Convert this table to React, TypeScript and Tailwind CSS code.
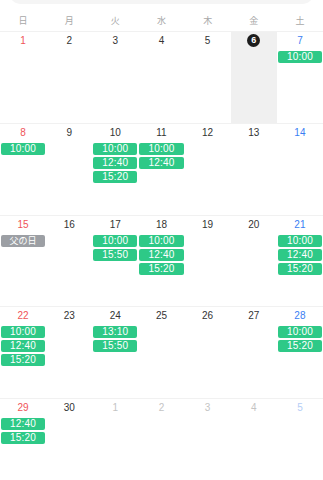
import React from 'react';

type Day = {
  date: number;
  dow: number;
  faded?: boolean;
  today?: boolean;
  holiday?: string;
  slots?: string[];
};

const WEEKDAYS = ['日', '月', '火', '水', '木', '金', '土'];

const slotsByDate: Record<number, string[]> = {
  7: ['10:00'],
  8: ['10:00'],
  10: ['10:00', '12:40', '15:20'],
  11: ['10:00', '12:40'],
  17: ['10:00', '15:50'],
  18: ['10:00', '12:40', '15:20'],
  21: ['10:00', '12:40', '15:20'],
  22: ['10:00', '12:40', '15:20'],
  24: ['13:10', '15:50'],
  28: ['10:00', '15:20'],
  29: ['12:40', '15:20'],
};

function buildWeeks(): Day[][] {
  const weeks: Day[][] = [];
  let d = 1;
  for (let w = 0; w < 5; w++) {
    const week: Day[] = [];
    for (let i = 0; i < 7; i++) {
      const faded = d > 30;
      const date = faded ? d - 30 : d;
      week.push({
        date,
        dow: i,
        faded,
        today: !faded && date === 6,
        holiday: !faded && date === 15 ? '父の日' : undefined,
        slots: faded ? [] : slotsByDate[date] ?? [],
      });
      d++;
    }
    weeks.push(week);
  }
  return weeks;
}

function numberColor(day: Day) {
  if (day.faded) {
    return day.dow === 6 ? 'text-[#b5cdf6]' : 'text-[#c4c4c4]';
  }
  if (day.dow === 0) return 'text-[#ef5458]';
  if (day.dow === 6) return 'text-[#3a7ef3]';
  return 'text-[#333333]';
}

function DayCell({ day }: { day: Day }) {
  return (
    <div className={day.today ? 'flex-1 min-w-0 bg-[#f0f0f0]' : 'flex-1 min-w-0'}>
      {/* Date number */}
      <div className="h-[17px] flex items-center justify-center">
        {day.today ? (
          <span className="w-[13px] h-[13px] rounded-full bg-[#1c1c1c] text-white text-[9px] font-bold leading-[13px] text-center">
            {day.date}
          </span>
        ) : (
          <span className={`text-[10px] leading-[17px] ${numberColor(day)}`}>{day.date}</span>
        )}
      </div>

      {/* Slots */}
      <div className="mt-[2px] flex flex-col gap-[2px] px-[1px]">
        {day.holiday && (
          <div className="h-[12px] rounded-[2px] bg-[#9c9fa4] text-white text-[9px] leading-[12px] text-center">
            {day.holiday}
          </div>
        )}
        {day.slots?.map((s) => (
          <div
            key={s}
            className="h-[12px] rounded-[2px] bg-[#2ec987] text-white text-[10px] leading-[12px] text-center tracking-[0.2px]"
          >
            {s}
          </div>
        ))}
      </div>
    </div>
  );
}

export default function App() {
  const weeks = buildWeeks();

  return (
    <div
      className="w-[323px] h-[480px] overflow-hidden bg-white"
      style={{ fontFamily: '"Liberation Sans", "Noto Sans CJK JP", sans-serif' }}
    >
      {/* Bottom edge of the search field above */}
      <div className="h-[4px] overflow-hidden flex items-end px-[10px]">
        <div className="h-[20px] w-full shrink-0 rounded-[10px] bg-[#f5f5f5]" />
      </div>

      {/* Weekday header */}
      <div className="h-[27px] flex items-end pb-[4px]">
        {WEEKDAYS.map((w) => (
          <div key={w} className="flex-1 text-center text-[9px] leading-[12px] text-[#a8a8a8]">
            {w}
          </div>
        ))}
      </div>

      {/* Weeks */}
      {weeks.map((week, i) => (
        <div key={i} className="h-[91.75px] flex border-t border-[#f1f1f1] box-border">
          {week.map((day) => (
            <DayCell key={`${i}-${day.date}`} day={day} />
          ))}
        </div>
      ))}
    </div>
  );
}
